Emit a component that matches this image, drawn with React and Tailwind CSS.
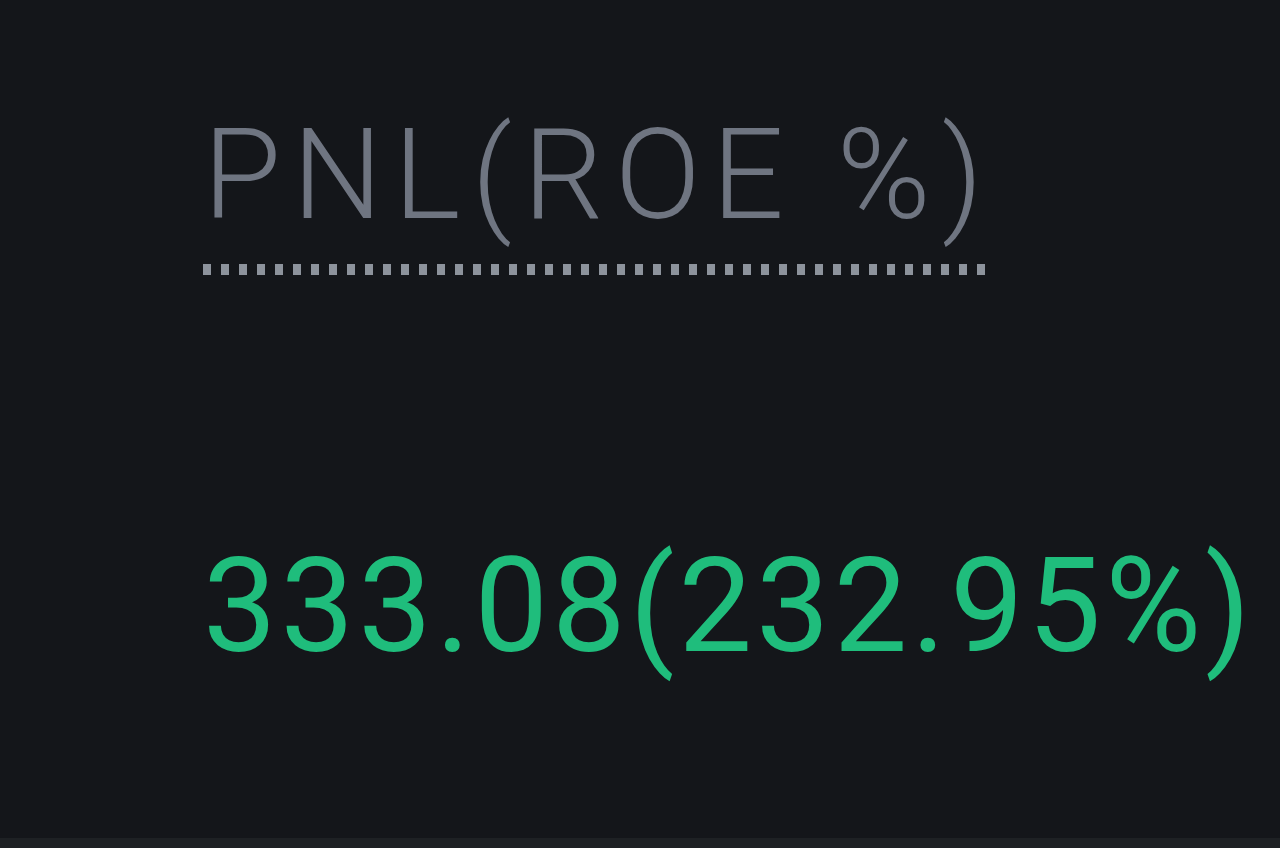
export default function App() {
  return (
    <div className="w-[1280px] h-[848px] bg-[#14161a] flex flex-col overflow-hidden" style={{ fontFamily: 'Roboto, "Liberation Sans", sans-serif' }}>
      <div className="flex-1 flex flex-col items-start pl-[203px] pt-[105px]">
        <div className="flex flex-col items-stretch">
          <span className="text-[127px] leading-[140px] font-light text-[#6f7581] tracking-[11px]">PNL(ROE %)</span>
          <div className="h-[11px] mt-[19px] bg-[repeating-linear-gradient(to_right,#8d939c_0_8px,transparent_8px_18px)]" />
        </div>
        <span className="mt-[256px] text-[131px] leading-[150px] text-[#1fbd7c] tracking-[4px] whitespace-nowrap">333.08(232.95%)</span>
      </div>
      <div className="h-[10px] bg-[#1e2124]" />
    </div>
  );
}
